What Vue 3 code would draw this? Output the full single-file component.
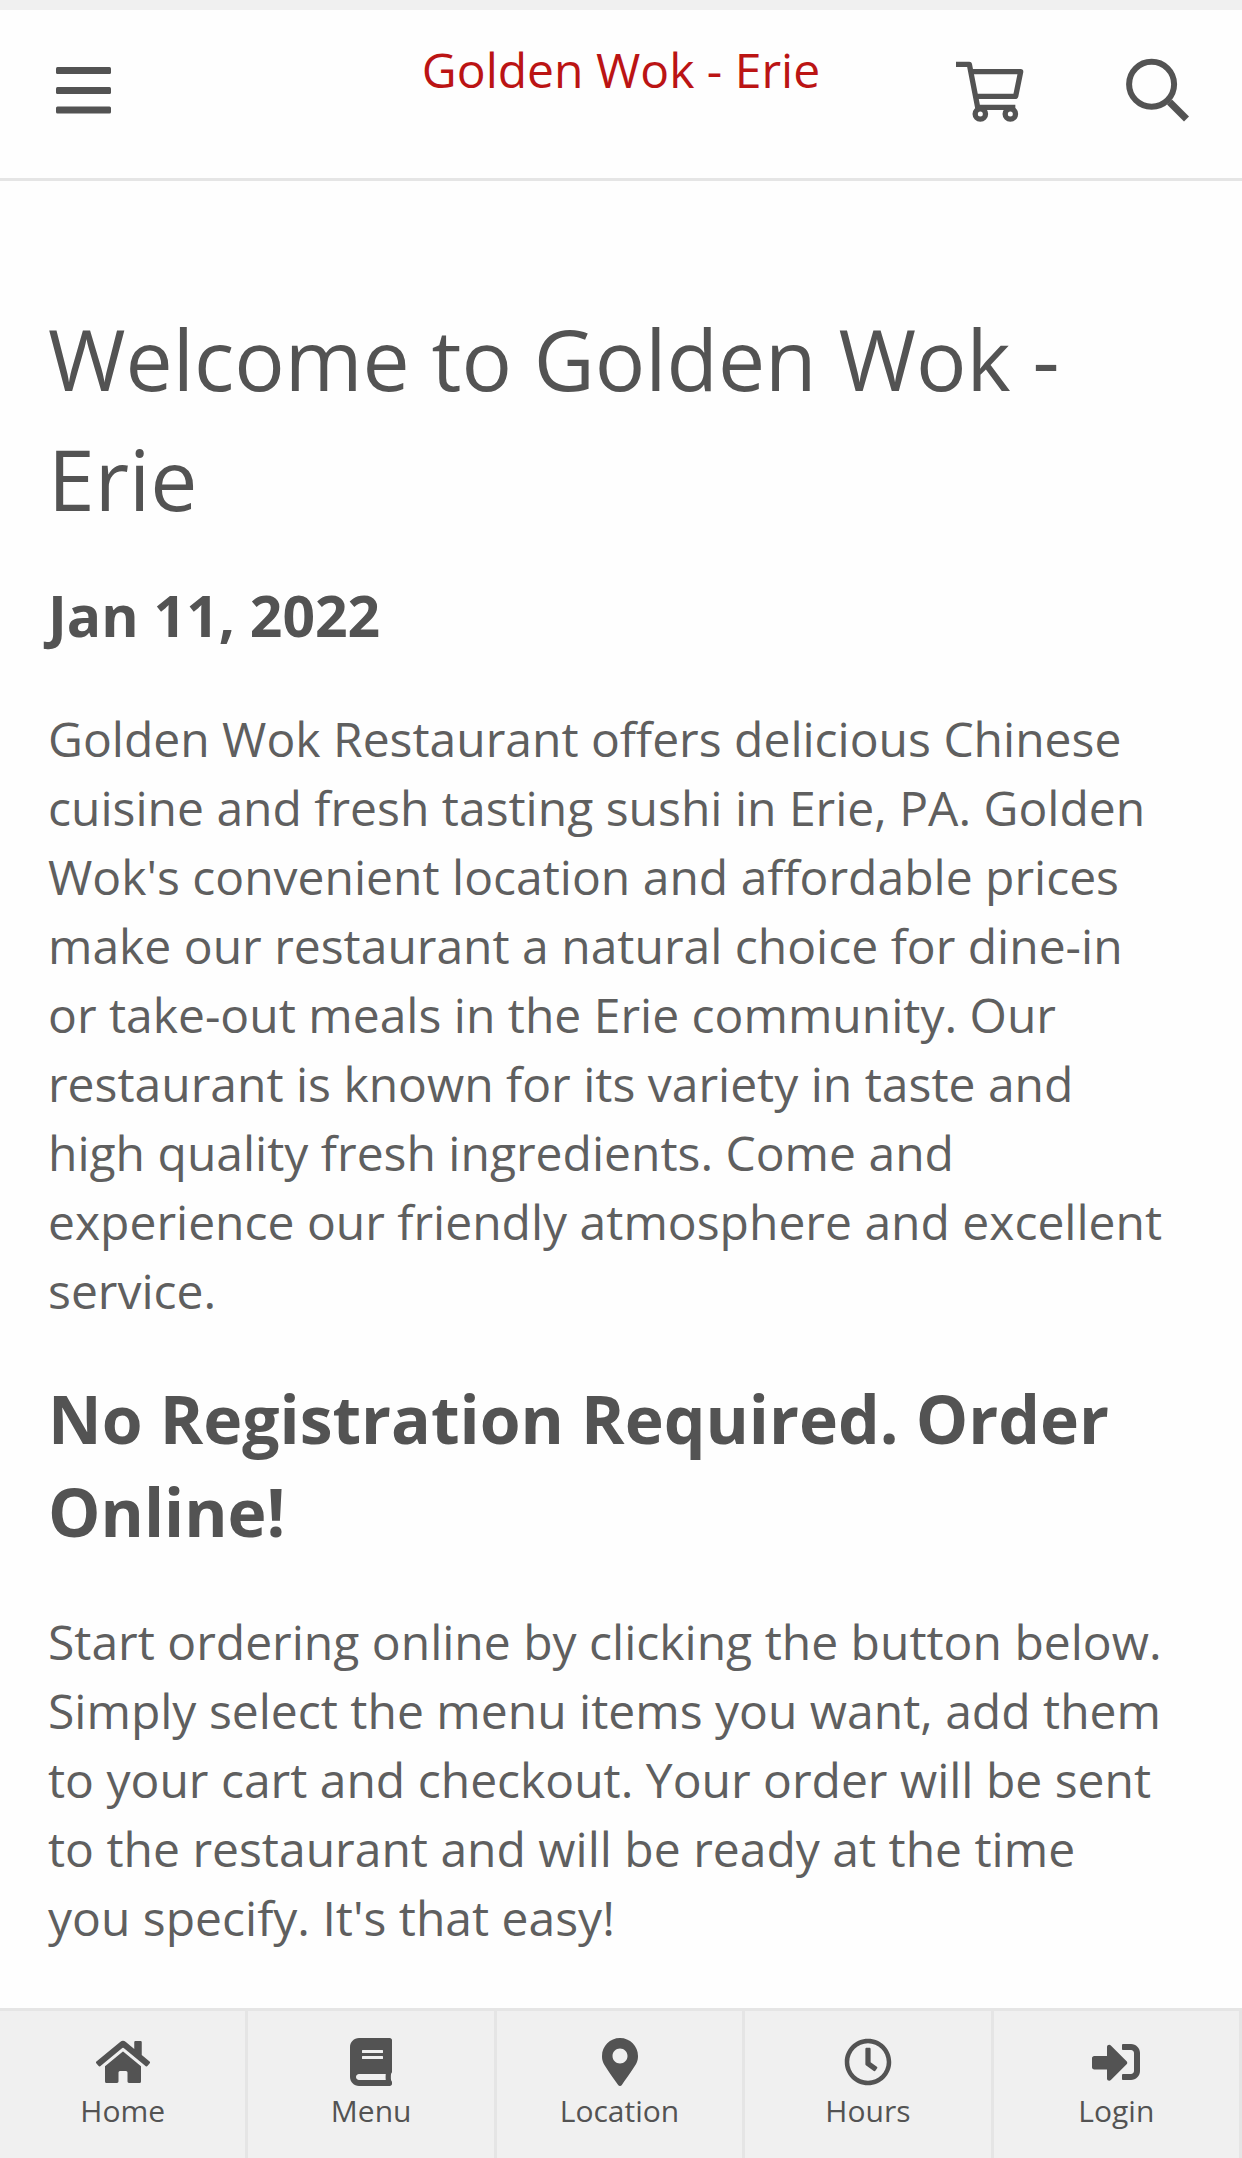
<script setup>
import { ref } from 'vue'

const restaurant = ref('Golden Wok - Erie')

// Tabs of the bottom bar
const tabs = ref([
  {
    label: 'Home',
    width: 576,
    path: 'M280.37 148.26L96 300.11V464a16 16 0 0 0 16 16l112.06-.29a16 16 0 0 0 15.92-16V368a16 16 0 0 1 16-16h64a16 16 0 0 1 16 16v95.64a16 16 0 0 0 16 16.05L464 480a16 16 0 0 0 16-16V300L295.67 148.26a12.19 12.19 0 0 0-15.3 0zM571.6 251.47L488 182.56V44.05a12 12 0 0 0-12-12h-56a12 12 0 0 0-12 12v72.61L318.47 43a48 48 0 0 0-61 0L4.34 251.47a12 12 0 0 0-1.6 16.9l25.5 31A12 12 0 0 0 45.15 301l235.22-193.74a12.19 12.19 0 0 1 15.3 0L530.9 301a12 12 0 0 0 16.9-1.6l25.5-31a12 12 0 0 0-1.7-16.93z'
  },
  {
    label: 'Menu',
    width: 448,
    path: 'M448 360V24c0-13.3-10.7-24-24-24H96C43 0 0 43 0 96v320c0 53 43 96 96 96h328c13.3 0 24-10.7 24-24v-16c0-7.5-3.5-14.3-8.9-18.7-4.2-15.4-4.2-59.3 0-74.7 5.4-4.3 8.9-11.1 8.9-18.6zM128 134c0-3.3 2.7-6 6-6h212c3.3 0 6 2.7 6 6v20c0 3.3-2.7 6-6 6H134c-3.3 0-6-2.7-6-6v-20zm0 64c0-3.3 2.7-6 6-6h212c3.3 0 6 2.7 6 6v20c0 3.3-2.7 6-6 6H134c-3.3 0-6-2.7-6-6v-20zm253.4 250H96c-17.7 0-32-14.3-32-32 0-17.6 14.4-32 32-32h285.4c-1.9 17.1-1.9 46.9 0 64z'
  },
  {
    label: 'Location',
    width: 384,
    path: 'M172.268 501.67C26.97 291.031 0 269.413 0 192 0 85.961 85.961 0 192 0s192 85.961 192 192c0 77.413-26.97 99.031-172.268 309.67-9.535 13.774-29.93 13.773-39.464 0zM192 272c44.183 0 80-35.817 80-80s-35.817-80-80-80-80 35.817-80 80 35.817 80 80 80z'
  },
  {
    label: 'Hours',
    width: 512,
    path: 'M256 8C119 8 8 119 8 256s111 248 248 248 248-111 248-248S393 8 256 8zm0 448c-110.5 0-200-89.5-200-200S145.5 56 256 56s200 89.5 200 200-89.5 200-200 200zm61.8-104.4l-84.9-61.7c-3.1-2.3-4.9-5.9-4.9-9.7V116c0-6.6 5.4-12 12-12h32c6.6 0 12 5.4 12 12v141.7l66.8 48.6c5.4 3.9 6.5 11.4 2.6 16.8L334.6 349c-3.9 5.3-11.4 6.5-16.8 2.6z'
  },
  {
    label: 'Login',
    width: 512,
    path: 'M416 448h-84c-6.6 0-12-5.4-12-12v-40c0-6.6 5.4-12 12-12h84c17.7 0 32-14.3 32-32V160c0-17.7-14.3-32-32-32h-84c-6.6 0-12-5.4-12-12V76c0-6.6 5.4-12 12-12h84c53 0 96 43 96 96v192c0 53-43 96-96 96zm-47-201L201 79c-15-15-41-4.5-41 17v96H24c-13.3 0-24 10.7-24 24v96c0 13.3 10.7 24 24 24h136v96c0 21.5 26 32 41 17l168-168c9.3-9.4 9.3-24.6 0-34z'
  }
])
</script>

<template>
  <div class="page">
    <header class="header">
      <button class="icon-button" aria-label="Open menu">
        <svg class="bars" viewBox="0 0 55 47">
          <rect width="55" height="7" rx="1.5" />
          <rect y="20" width="55" height="7" rx="1.5" />
          <rect y="39.5" width="55" height="7" rx="1.5" />
        </svg>
      </button>

      <div class="brand">{{ restaurant }}</div>

      <div class="actions">
        <button class="icon-button" aria-label="Cart">
          <svg class="cart" viewBox="0 0 204 192">
            <path d="M0 19H40L65 148H178" />
            <path d="M46 41H194L179 115H62" />
            <circle cx="73" cy="168" r="15.5" />
            <circle cx="163" cy="168" r="15.5" />
          </svg>
        </button>
        <button class="icon-button" aria-label="Search">
          <svg class="search" viewBox="0 0 64 64">
            <circle cx="25.6" cy="26.3" r="22.5" />
            <path class="handle" d="M43.5 44L60.5 61" />
          </svg>
        </button>
      </div>
    </header>

    <main class="content">
      <h1>Welcome to {{ restaurant }}</h1>
      <h3>Jan 11, 2022</h3>
      <p>
        Golden Wok Restaurant offers delicious Chinese cuisine and fresh tasting sushi in Erie, PA.
        Golden Wok's convenient location and affordable prices make our restaurant a natural choice
        for dine-in or take-out meals in the Erie community. Our restaurant is known for its variety
        in taste and high quality fresh ingredients. Come and experience our friendly atmosphere and
        excellent service.
      </p>
      <h2>No Registration Required. Order Online!</h2>
      <p>
        Start ordering online by clicking the button below. Simply select the menu items you want,
        add them to your cart and checkout. Your order will be sent to the restaurant and will be
        ready at the time you specify. It's that easy!
      </p>
    </main>

    <nav class="tabs">
      <a v-for="tab in tabs" :key="tab.label" class="tab">
        <svg class="tab-icon" :viewBox="`0 0 ${tab.width} 512`">
          <path :d="tab.path" />
        </svg>
        <span>{{ tab.label }}</span>
      </a>
    </nav>
  </div>
</template>

<style>
body {
  margin: 0;
  background: #fefefe;
}
</style>

<style scoped>
.page {
  display: flex;
  flex-direction: column;
  box-sizing: border-box;
  height: 100vh;
  overflow: hidden;
  border-top: 10px solid #f0f0f0;
  color: #535353;
  font-family: 'Open Sans', sans-serif;
}

.header {
  display: grid;
  grid-template-columns: 1fr auto 1fr;
  align-items: start;
  flex: none;
  box-sizing: border-box;
  height: 171px;
  padding: 0 52px;
  border-bottom: 3px solid #e5e5e5;
}

.icon-button {
  display: block;
  padding: 0;
  border: none;
  background: none;
  cursor: pointer;
}

.icon-button svg {
  display: block;
}

.bars {
  width: 55px;
  height: 47px;
  margin: 57px 0 0 4px;
  fill: #535353;
}

.brand {
  padding-top: 25px;
  color: #bb1414;
  font-size: 48px;
  line-height: 69px;
}

.actions {
  display: flex;
  justify-content: flex-end;
  gap: 102px;
  padding-top: 48px;
}

.cart {
  width: 68px;
  height: 64px;
  fill: none;
  stroke: #535353;
  stroke-width: 16;
  stroke-linejoin: round;
}

.search {
  width: 64px;
  height: 64px;
  fill: none;
  stroke: #535353;
  stroke-width: 6;
}

.handle {
  stroke-width: 7;
}

.content {
  flex: 1;
  min-height: 0;
  padding: 118px 77px 0 48px;
}

h1 {
  margin: 0 0 37px;
  font-size: 84px;
  font-weight: 400;
  line-height: 120px;
}

h3 {
  margin: 0 0 50px;
  font-size: 57px;
  font-weight: 700;
  line-height: 78px;
}

h2 {
  margin: 0 0 49px;
  font-size: 66px;
  font-weight: 700;
  line-height: 93px;
}

p {
  margin: 0 0 47px;
  color: #5f5f5f;
  font-size: 48px;
  line-height: 69px;
}

.tabs {
  display: flex;
  flex: none;
  box-sizing: border-box;
  height: 150px;
  border-top: 3px solid #e5e5e5;
  background: #f0f0f0;
}

.tab {
  display: flex;
  flex: 1;
  flex-direction: column;
  align-items: center;
  min-width: 0;
  padding-top: 27px;
  border-right: 3px solid #e5e5e5;
  font-size: 30px;
  line-height: 42px;
}

.tab-icon {
  height: 48px;
  margin-bottom: 4px;
  fill: #535353;
}
</style>
